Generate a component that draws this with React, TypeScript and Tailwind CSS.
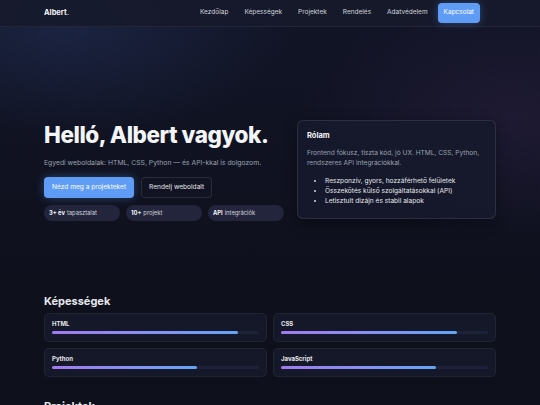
import { useState } from 'react';

const navLinks = ['Kezdőlap', 'Képességek', 'Projektek', 'Rendelés', 'Adatvédelem'];

const skills = [
  { name: 'HTML', level: 90 },
  { name: 'CSS', level: 85 },
  { name: 'Python', level: 70 },
  { name: 'JavaScript', level: 75 },
];

const stats = [
  { strong: '3+ év', rest: 'tapasztalat' },
  { strong: '10+', rest: 'projekt' },
  { strong: 'API', rest: 'integrációk' },
];

export default function App() {
  const [active] = useState('Kapcsolat');

  return (
    <div
      className="min-h-screen bg-[#0e101c] text-gray-100"
      style={{ fontFamily: 'Inter, "Noto Sans", sans-serif' }}
    >
      {/* Background glow */}
      <div className="bg-[radial-gradient(ellipse_60%_55%_at_12%_8%,#1b2442_0%,transparent_70%),radial-gradient(ellipse_55%_60%_at_95%_40%,#1e1a33_0%,transparent_70%),linear-gradient(180deg,#121527_0%,#0e101c_100%)]">
        {/* Header */}
        <header className="h-[27px] border-b border-white/5 bg-[#161a2b]/90">
          <div className="mx-[44px] flex h-full items-center justify-between">
            <span className="text-[7.5px] font-bold text-gray-100">
              Albert<span className="text-gray-400">.</span>
            </span>
            <nav className="mr-[16px] flex items-center gap-[16px] text-[6.5px] text-gray-300">
              {navLinks.map(link => (
                <a key={link} href="#" className="hover:text-white">
                  {link}
                </a>
              ))}
              <a
                href="#"
                className="-ml-[6px] rounded-[4px] bg-[#5f9cf6] px-[6px] py-[5px] text-white shadow-[0_0_8px_rgba(96,165,250,0.35)]"
              >
                {active}
              </a>
            </nav>
          </div>
        </header>

        {/* Hero */}
        <section className="mx-[44px] grid grid-cols-[240px_1fr] gap-[13px] pt-[93px] pb-[72px]">
          <div>
            <h1 className="text-[22.5px] leading-[30px] font-extrabold tracking-[-0.02em] text-gray-100">
              Helló, Albert vagyok.
            </h1>
            <p className="mt-[8px] text-[6.8px] text-gray-400">
              Egyedi weboldalak: HTML, CSS, Python — és API-kkal is dolgozom.
            </p>
            <div className="mt-[9px] flex gap-[7px]">
              <button className="h-[21px] rounded-[4px] bg-[#5f9cf6] px-[8px] text-[6.6px] text-white shadow-[0_0_10px_rgba(96,165,250,0.35)]">
                Nézd meg a projekteket
              </button>
              <button className="h-[21px] rounded-[4px] border border-white/10 bg-[#111322] px-[7px] text-[6.6px] text-gray-200">
                Rendelj weboldalt
              </button>
            </div>
            <div className="mt-[7px] flex gap-[6px]">
              {stats.map(s => (
                <span
                  key={s.strong}
                  className="flex h-[16px] w-[76px] items-center rounded-full bg-[#23253d] px-[5px] text-[5.8px] text-gray-300"
                >
                  <b className="mr-[2px] font-bold text-gray-100">{s.strong}</b>
                  {s.rest}
                </span>
              ))}
            </div>
          </div>

          <div className="mb-[2px] rounded-[6px] border border-white/10 bg-[#161a2c]/90 px-[9px] pt-[9px] shadow-[0_4px_14px_rgba(0,0,0,0.35)]">
            <h2 className="text-[7.5px] font-bold text-gray-100">Rólam</h2>
            <p className="mt-[7px] text-[6.6px] leading-[10px] text-gray-400">
              Frontend fókusz, tiszta kód, jó UX. HTML, CSS, Python, rendszeres API integrációkkal.
            </p>
            <ul className="mt-[8px] list-disc pl-[18px] text-[6.6px] leading-[10px] text-gray-200 marker:text-gray-300">
              <li>Reszponzív, gyors, hozzáférhető felületek</li>
              <li>Összekötés külső szolgáltatásokkal (API)</li>
              <li>Letisztult dizájn és stabil alapok</li>
            </ul>
          </div>
        </section>
      </div>

      {/* Skills */}
      <section className="mx-[44px]">
        <h2 className="text-[11px] font-bold text-gray-200">Képességek</h2>
        <div className="mt-[3px] grid grid-cols-2 gap-x-[6px] gap-y-[6px]">
          {skills.map(skill => (
            <div
              key={skill.name}
              className="h-[29px] rounded-[5px] border border-white/5 bg-[#151828] px-[7px] pt-[6px]"
            >
              <div className="text-[6px] leading-[8px] font-bold text-gray-200">{skill.name}</div>
              <div className="mt-[3px] h-[3px] rounded-full bg-[#1e2238]">
                <div
                  className="h-full rounded-full bg-gradient-to-r from-[#a07af0] to-[#63a4f5]"
                  style={{ width: `${skill.level}%` }}
                />
              </div>
            </div>
          ))}
        </div>
      </section>

      {/* Projects */}
      <section className="mx-[44px] mt-[21px]">
        <h2 className="text-[11px] font-bold text-gray-200">Projektek</h2>
        <div className="h-[120px]" />
      </section>
    </div>
  );
}
